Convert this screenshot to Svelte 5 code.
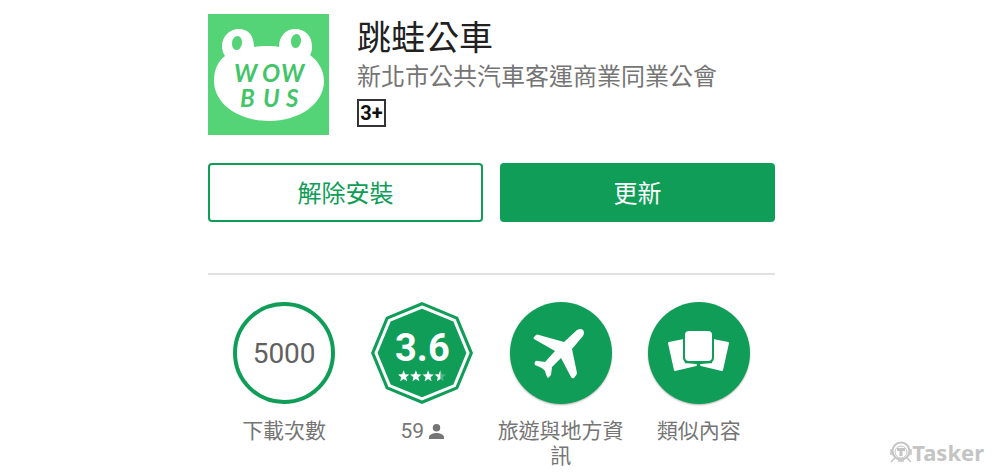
<script lang="ts">
  const title = '跳蛙公車';
  const publisher = '新北市公共汽車客運商業同業公會';

  // regular octagon with a vertex at the top
  function octagon(c: number, r: number) {
    return Array.from({ length: 8 }, (_, i) => {
      const a = (i * Math.PI) / 4;
      return `${(c + r * Math.sin(a)).toFixed(2)},${(c - r * Math.cos(a)).toFixed(2)}`;
    }).join(' ');
  }

  const star = 'M6 0l1.6 4.1 4.4.3-3.4 2.8 1.1 4.3L6 9.1l-3.7 2.4 1.1-4.3L0 4.4l4.4-.3z';
</script>

<main class="page">
  <header class="app">
    <svg class="logo" viewBox="0 0 121 121" role="img" aria-label="WOW BUS">
      <rect width="121" height="121" fill="#55d477" />
      <path
        fill="#fff"
        d="M61 32c-6 0-11 0-15 1C46 21 40 15 31 15c-10 0-17 8-17 17 0 4 1 7 3 10C10 47 6 56 6 67c0 23 25 40 55 40s55-17 55-40c0-11-6-20-14-26 2-3 2-6 2-9 0-10-7-17-17-17-9 0-16 7-16 18-3-1-6-1-10-1z"
      />
      <ellipse cx="29" cy="29" rx="5" ry="7" fill="#55d477" transform="rotate(8 29 29)" />
      <ellipse cx="88" cy="27" rx="5" ry="7" fill="#55d477" transform="rotate(8 88 27)" />
      <g class="logo-text">
        <text x="26 54 73" y="68">WOW</text>
        <text x="32 55 78" y="93">BUS</text>
      </g>
    </svg>
    <div class="info">
      <h1>{title}</h1>
      <p class="publisher">{publisher}</p>
      <span class="age">3+</span>
    </div>
  </header>

  <div class="actions">
    <button type="button" class="outlined">解除安裝</button>
    <button type="button" class="filled">更新</button>
  </div>

  <ul class="stats">
    <li>
      <div class="badge ring">5000</div>
      <span class="label">下載次數</span>
    </li>
    <li>
      <div class="badge rating">
        <svg class="shape" viewBox="0 0 102 102" aria-hidden="true">
          <polygon points={octagon(51, 51)} fill="#0f9d58" />
          <polygon points={octagon(51, 46)} fill="none" stroke="#fff" stroke-width="3" />
        </svg>
        <strong>3.6</strong>
        <svg class="stars" viewBox="0 0 51 12" aria-hidden="true">
          <path d={star} fill="#fff" />
          <path d={star} fill="#fff" transform="translate(13)" />
          <path d={star} fill="#fff" transform="translate(26)" />
          <path d={star} fill="#4db584" transform="translate(39)" />
          <path d="M45 0v9.1l-3.7 2.4 1.1-4.3L39 4.4l4.4-.3z" fill="#fff" />
        </svg>
      </div>
      <span class="label count">
        59
        <svg class="person" viewBox="0 0 16 16" aria-hidden="true">
          <circle cx="8" cy="4" r="4" />
          <path d="M0 16v-2c0-3 5-4.5 8-4.5s8 1.5 8 4.5v2z" />
        </svg>
      </span>
    </li>
    <li>
      <div class="badge solid">
        <svg viewBox="0 0 102 102" aria-hidden="true">
          <path
            fill="#fff"
            d="M24 35l2-2q1-1 3 0l25 7 13-12q4-2 6 0t0 6L62 47l5 24q0 2-3 5-2 1-3-1L51 56l-9 9-1 8-3 3q-1 0-3-7-2-3-10-6-1-2 0-3 1-2 3-1l7 1 10-11-21-12q-1-1 0-2z"
          />
        </svg>
      </div>
      <span class="label">旅遊與地方資訊</span>
    </li>
    <li>
      <div class="badge solid">
        <svg viewBox="0 0 102 102" aria-hidden="true">
          <g fill="#fff" stroke="#fff" stroke-width="2" stroke-linejoin="round">
            <path d="M21 41l15-3v24l12 1-21 5z" />
            <path d="M80 41l-15-3v24l-12 1 21 5z" />
          </g>
          <rect x="35" y="27" width="31" height="34" rx="5" fill="#0f9d58" />
          <rect x="37" y="29" width="27" height="30" rx="4" fill="#fff" />
        </svg>
      </div>
      <span class="label">類似內容</span>
    </li>
  </ul>
</main>

<div class="watermark">
  <svg viewBox="0 0 22 22" fill="none" stroke="#c4c4c4" aria-hidden="true">
    <circle cx="11" cy="10" r="8.5" stroke-width="2" />
    <circle cx="11" cy="11" r="6" />
    <path d="M7 8.5h8M11 8v7" stroke-width="3" />
    <path d="M1 8v6M21 8v6M5 17l-4 4M17 17l4 4M8 20h6" stroke-width="1.5" />
  </svg>
  <span>Tasker</span>
</div>

<style>
  :global(body) {
    background: #fff;
    font-family: Roboto, 'Noto Sans CJK TC', sans-serif;
  }

  .page {
    box-sizing: border-box;
    max-width: 584px;
    margin: 0 auto;
    padding: 14px 17px 0 0;
  }

  .app {
    display: flex;
    gap: 28px;
  }
  .logo {
    flex: none;
    width: 121px;
    height: 121px;
  }
  .logo-text {
    fill: #42c568;
    font: italic bold 24px Lato, sans-serif;
  }
  .info {
    padding-top: 2px;
  }
  h1 {
    margin: 0;
    color: #212121;
    font-size: 34px;
    font-weight: 400;
    line-height: 44px;
  }
  .publisher {
    margin: 0;
    color: #757575;
    font-size: 24px;
    font-weight: 400;
    line-height: 34px;
  }
  .age {
    display: block;
    box-sizing: border-box;
    width: 29px;
    margin-top: 5px;
    border: 2px solid #333;
    color: #111;
    font-size: 20px;
    font-weight: 700;
    line-height: 24px;
    text-align: center;
  }

  .actions {
    display: flex;
    gap: 17px;
    margin-top: 28px;
  }
  .actions button {
    flex: 1;
    height: 59px;
    padding: 0 0 2px;
    border: 2px solid #0f9d58;
    border-radius: 4px;
    font-family: inherit;
    font-size: 24px;
  }
  .outlined {
    background: #fff;
    color: #0f9d58;
  }
  .filled {
    background: #0f9d58;
    color: #fff;
  }

  .stats {
    display: grid;
    grid-template-columns: repeat(4, 1fr);
    margin: 51px 0 0;
    padding: 27px 7px 0;
    border-top: 2px solid #e0e0e0;
    list-style: none;
  }
  .stats li {
    display: flex;
    flex-direction: column;
    align-items: center;
    gap: 15px;
  }
  .badge {
    box-sizing: border-box;
    position: relative;
    width: 102px;
    height: 102px;
    border-radius: 50%;
  }
  .ring {
    border: 4px solid #0f9d58;
    color: #616161;
    font-size: 28px;
    line-height: 96px;
    text-align: center;
  }
  .solid {
    background: #0f9d58;
    box-shadow: 0 1px 2px rgba(0, 0, 0, 0.3);
  }
  .rating {
    display: flex;
    flex-direction: column;
    align-items: center;
    padding-top: 24px;
    color: #fff;
  }
  .shape {
    position: absolute;
    inset: 0;
  }
  .rating strong {
    position: relative;
    font-size: 38px;
    line-height: 44px;
  }
  .stars {
    position: relative;
    width: 48px;
    height: 12px;
  }
  .label {
    color: #757575;
    font-size: 21px;
    line-height: 25px;
    text-align: center;
  }
  .count {
    display: flex;
    align-items: center;
    gap: 5px;
  }
  .person {
    width: 15px;
    height: 15px;
    fill: #757575;
  }

  .watermark {
    position: absolute;
    right: 16px;
    bottom: 9px;
    display: flex;
    align-items: center;
    color: #c4c4c4;
    font: bold 22px/24px 'Noto Sans', sans-serif;
  }
  .watermark svg {
    width: 22px;
    height: 22px;
  }
</style>
